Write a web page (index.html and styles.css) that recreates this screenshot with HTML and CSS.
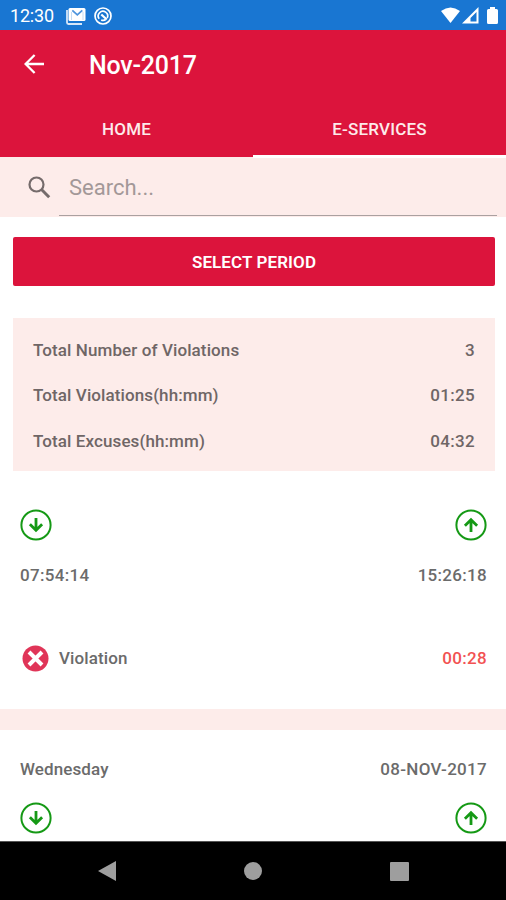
FILE: index.html
```
<!DOCTYPE html>
<html lang="en">
<head>
    <meta charset="UTF-8">
    <title>Nov-2017</title>
    <meta name="viewport" content="width=device-width, initial-scale=1.0">
    <link rel="stylesheet" href="styles.css">
</head>
<body>
    <!-- shared icons for the check in / check out rows -->
    <svg class="defs" width="0" height="0">
        <symbol id="icon-in" viewBox="0 0 32 32">
            <circle cx="16" cy="16" r="14.6"/>
            <path class="arrow" d="M16 9v12M9.900 15.200l6.100 6.100 6.100-6.100"/>
        </symbol>
        <symbol id="icon-out" viewBox="0 0 32 32">
            <circle cx="16" cy="16" r="14.6"/>
            <path class="arrow" d="M16 23v-12M9.900 16.800l6.100-6.100 6.100 6.100"/>
        </symbol>
    </svg>

    <div class="status-bar">
        <span class="clock">12:30</span>
        <svg class="mail" width="20" height="18" viewBox="0 0 20 18">
            <path d="M1 3v12.500Q1 17 2.500 17H16" fill="none" stroke="#d6e6f8" stroke-width="1.800"/>
            <rect x="2.500" y="1" width="17" height="13" rx="1.500" fill="#fff"/>
            <path d="M6.300 3.300l5 4.500 5-4.500" fill="none" stroke="#4f95dd" stroke-width="1.800"/>
            <path d="M5.500 5v8M17 5v8" fill="none" stroke="#c5dcf5" stroke-width="1"/>
        </svg>
        <svg class="sync" width="18" height="18" viewBox="0 0 18 18" fill="none" stroke="#fff">
            <circle cx="9" cy="9" r="8" stroke-width="1.700"/>
            <path d="M5.200 11.800A4.700 4.700 0 1 1 13.200 11M7.200 12.900a4.500 4.500 0 0 0 4.500-.4" stroke-width="1.700"/>
            <path d="M7.300 7.500l5.500 5" stroke-width="2.200"/>
        </svg>
        <div class="signals">
            <svg width="19" height="17" viewBox="0 0 19 17"><path d="M0 4Q9.500-3 19 4L9.500 16z" fill="#fff"/></svg>
            <svg width="17" height="17" viewBox="0 0 17 17"><path fill-rule="evenodd" d="M16.500 0v16.500H0zM14.500 5L8.500 11v3.500h6z" fill="#fff"/></svg>
            <svg class="battery" width="11" height="17" viewBox="0 0 11 17"><path d="M3 0h5v2h1.500Q11 2 11 3.500v12Q11 17 9.500 17h-8Q0 17 0 15.500v-12Q0 2 1.500 2H3z" fill="#fff"/></svg>
        </div>
    </div>

    <div class="header">
        <div class="toolbar">
            <svg width="20" height="20" viewBox="0 0 20 20" fill="none" stroke="#fff" stroke-width="2.300"><path d="M20 10H1.800M10.600 1L1.600 10l9 9"/></svg>
            <h1>Nov-2017</h1>
        </div>
        <div class="tabs">
            <a class="tab">HOME</a>
            <a class="tab active">E-SERVICES</a>
        </div>
    </div>

    <div class="search">
        <svg width="23" height="23" viewBox="0 0 23 23" fill="none" stroke="#756b6b">
            <circle cx="8.500" cy="8.500" r="7" stroke-width="2.200"/>
            <path d="M13.500 13.500l7.700 7.700" stroke-width="3"/>
        </svg>
        <input type="text" placeholder="Search...">
    </div>

    <div class="content">
        <button class="period">SELECT PERIOD</button>

        <div class="summary">
            <div class="row"><span>Total Number of Violations</span><span class="value">3</span></div>
            <div class="row"><span>Total Violations(hh:mm)</span><span class="value">01:25</span></div>
            <div class="row"><span>Total Excuses(hh:mm)</span><span class="value">04:32</span></div>
        </div>

        <div class="entry first">
            <div class="row icons">
                <svg><use href="#icon-in"/></svg>
                <svg><use href="#icon-out"/></svg>
            </div>
            <div class="row times"><span class="value">07:54:14</span><span class="value">15:26:18</span></div>
            <div class="row violation">
                <svg width="27" height="27" viewBox="0 0 27 27">
                    <circle cx="13.500" cy="13.500" r="13" fill="#e03558"/>
                    <path d="M7 7l13 13M20 7L7 20" stroke="#fff" stroke-width="4"/>
                </svg>
                <span>Violation</span>
                <span class="value late">00:28</span>
            </div>
        </div>

        <div class="entry">
            <div class="row day"><span>Wednesday</span><span class="value">08-NOV-2017</span></div>
            <div class="row icons">
                <svg><use href="#icon-in"/></svg>
                <svg><use href="#icon-out"/></svg>
            </div>
        </div>
    </div>

    <div class="nav-bar">
        <svg width="18" height="20" viewBox="0 0 18 20"><path d="M18 0v20L0 10z"/></svg>
        <svg width="18" height="18" viewBox="0 0 18 18"><circle cx="9" cy="9" r="9"/></svg>
        <svg width="19" height="19" viewBox="0 0 19 19"><rect width="19" height="19" rx="1"/></svg>
    </div>
</body>
</html>
```
FILE: styles.css
```
* { box-sizing: border-box; }
body {
    margin: 0;
    height: 900px;
    display: flex;
    flex-direction: column;
    overflow: hidden;
    font-family: Roboto, Arial, sans-serif;
    font-weight: 500;
    font-size: 17px;
    letter-spacing: 0.1px;
    color: #6b6b6b;
    background: #fff;
}
svg { display: block; flex: none; }
.defs { display: none; }
.status-bar {
    height: 30px;
    flex: none;
    display: flex;
    align-items: center;
    padding: 1px 8px 0 10px;
    background: #1976d2;
    color: #fff;
}
.clock {
    width: 56px;
    font-size: 18px;
    font-weight: 400;
    letter-spacing: -0.2px;
}
.sync { margin-left: 8px; }
.signals {
    display: flex;
    gap: 2px;
    margin-left: auto;
}
.battery { margin-left: 6px; }
.header {
    height: 128px;
    flex: none;
    background: #dc143c;
    color: #fff;
}
.toolbar {
    height: 71px;
    display: flex;
    align-items: center;
    gap: 45px;
    padding-left: 24px;
}
.toolbar svg { margin-top: -3px; }
.toolbar h1 {
    margin: 0;
    font-size: 25px;
    font-weight: 500;
    letter-spacing: -0.2px;
}
.tabs {
    height: 57px;
    display: flex;
}
.tab {
    flex: 1;
    padding-top: 18px;
    text-align: center;
    line-height: 20px;
    letter-spacing: 0.2px;
    color: #fdebeb;
    border-bottom: 1px solid #fdecea;
}
.tab.active { border-bottom: 3px solid #fff; }
.search {
    height: 59px;
    flex: none;
    display: flex;
    padding-left: 28px;
    background: #fdecea;
}
.search svg { margin-top: 18px; }
.search input {
    width: 438px;
    height: 58px;
    margin-left: 8px;
    padding: 2px 10px 0;
    border: none;
    border-bottom: 1px solid #aaa0a0;
    background: none;
    font: 400 22px Roboto, Arial, sans-serif;
}
.search input::placeholder { color: #a39898; }
.content {
    flex: 1;
    min-height: 0;
    overflow: hidden;
    padding-top: 20px;
}
.period {
    display: block;
    width: 482px;
    height: 49px;
    margin: 0 0 32px 13px;
    padding: 0;
    border: none;
    border-radius: 2px;
    background: #dc143c;
    color: #fff;
    font: 600 17px Roboto, Arial, sans-serif;
    letter-spacing: 0.1px;
}
.row {
    display: flex;
    align-items: center;
    justify-content: space-between;
}
.value { letter-spacing: 0.3px; }
.summary {
    width: 482px;
    height: 153px;
    margin-left: 13px;
    padding: 9px 20px 0;
    background: #fdecea;
}
.summary .row {
    height: 45.6px;
    color: #6f6666;
}
.entry { padding: 0 19px 0 20px; }
.entry.first {
    height: 259px;
    padding-top: 38px;
    border-bottom: 21px solid #fdecea;
}
.icons { margin-left: -0.5px; }
.icons svg {
    width: 32px;
    height: 32px;
    fill: none;
    stroke: #159915;
    stroke-width: 2;
}
.arrow { stroke-width: 2.8; }
.times {
    height: 20px;
    margin-top: 24px;
}
.violation {
    justify-content: flex-start;
    gap: 10px;
    height: 28px;
    margin-top: 59px;
    padding-left: 2px;
}
.late {
    margin-left: auto;
    color: #f25252;
}
.day { height: 78px; }
.day + .icons { margin-top: -6px; }
.nav-bar {
    height: 59px;
    flex: none;
    display: flex;
    align-items: center;
    justify-content: center;
    gap: 128px;
    background: #000;
    border-top: 1px solid #555;
}
.nav-bar svg { fill: #9e9e9e; }
```
